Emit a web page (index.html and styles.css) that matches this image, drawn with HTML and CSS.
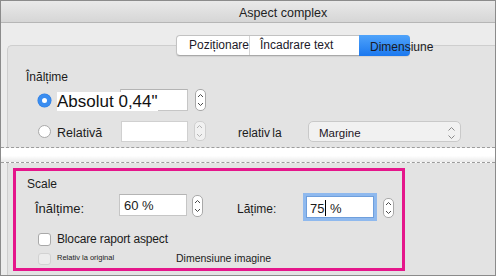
FILE: index.html
```html
<!DOCTYPE html>
<html lang="ro">
<head>
    <meta charset="UTF-8">
    <meta name="viewport" content="width=device-width, initial-scale=1.0">
    <title>Aspect complex</title>
    <link rel="stylesheet" href="styles.css">
</head>
<body>
    <div class="window">
        <div class="titlebar">Aspect complex</div>

        <div class="tabs">
            <div class="tab tab-pos">Poziționare</div>
            <div class="tab tab-wrap">Încadrare text</div>
            <div class="tab tab-size active">Dimensiune</div>
        </div>

        <div class="panel">
            <div class="group-title">Înălțime</div>
            <div class="row row-abs">
                <span class="radio checked"></span>
                <div class="abs-label"><span>Absolut 0,44"</span></div>
                <div class="field field-abs"></div>
                <span class="stepper"><svg width="11" height="22" viewBox="0 0 11 22"><path d="M3 8 L5.5 5.5 L8 8 M3 14 L5.5 16.5 L8 14" /></svg></span>
            </div>
            <div class="row row-rel">
                <span class="radio"></span>
                <div class="rel-label">Relativă</div>
                <div class="field field-rel"></div>
                <span class="stepper disabled"><svg width="11" height="20" viewBox="0 0 11 20"><path d="M3 7 L5.5 4.5 L8 7 M3 13 L5.5 15.5 L8 13" /></svg></span>
                <div class="rel-to">relativ la</div>
                <div class="select">Margine
                    <svg width="9" height="14" viewBox="0 0 9 14"><path d="M1.5 4.5 L4.5 1.5 L7.5 4.5 M1.5 9.5 L4.5 12.5 L7.5 9.5" /></svg>
                </div>
            </div>
        </div>

        <div class="divider"></div>

        <div class="panel panel-lower">
            <div class="scale-box">
                <div class="group-title scale-title">Scale</div>
                <div class="row row-scale">
                    <div class="scale-label">Înălțime:</div>
                    <div class="field field-scale">60 %</div>
                    <span class="stepper step-h"><svg width="11" height="22" viewBox="0 0 11 22"><path d="M3 8 L5.5 5.5 L8 8 M3 14 L5.5 16.5 L8 14" /></svg></span>
                    <div class="width-label">Lățime:</div>
                    <div class="field field-focus">75<span class="caret"></span> %</div>
                    <span class="stepper step-w"><svg width="11" height="20" viewBox="0 0 11 20"><path d="M3 7 L5.5 4.5 L8 7 M3 13 L5.5 15.5 L8 13" /></svg></span>
                </div>
                <div class="row row-check">
                    <span class="checkbox"></span>
                    <div class="check-label">Blocare raport aspect</div>
                </div>
                <div class="row row-check2">
                    <span class="checkbox disabled"></span>
                    <div class="orig-label">Relativ la original</div>
                    <div class="img-label">Dimensiune imagine</div>
                </div>
            </div>
        </div>
    </div>
</body>
</html>
```

FILE: styles.css
```css
* { margin: 0; padding: 0; box-sizing: border-box; }
body { width: 496px; height: 276px; overflow: hidden; font-family: "Liberation Sans", Arial, sans-serif; color: #1b1b1b; background-color: #ececec; }
.window { width: 496px; height: 276px; border: 1px solid #8b8b8b; background-color: #ececec; }

/* title bar */
.titlebar { height: 22px; padding: 3px 0 0 238px; line-height: 18px; font-size: 12.5px; color: #222; border-bottom: 1px solid #b6b6b6; background: linear-gradient(#e9e9e9, #d6d6d6); }

/* segmented tabs */
.tabs { position: relative; z-index: 1; display: flex; width: 234px; height: 21px; margin: 12px 0 -11px 175px; background-color: #fff; border: 1px solid #c2c2c2; border-bottom-color: #a9a9a9; border-radius: 4px; box-shadow: 0 1px 1px rgba(0, 0, 0, 0.08); font-size: 12px; line-height: 19px; color: #1c1a2a; }
.tab { white-space: nowrap; }
.tab-pos { width: 72px; padding-left: 12px; }
.tab-wrap { width: 111px; padding-left: 10px; border-left: 1px solid #d4d4d4; }
.tab-size { width: 49px; padding-left: 11px; }
.tab.active { margin: -1px -1px -1px 0; padding-top: 3px; width: 51px; background: linear-gradient(#4fa3fa, #1b78ef); border-radius: 0 4px 4px 0; color: #1a1a24; }

/* panels */
.panel { height: 102px; margin-left: 6px; padding: 24px 0 0 18px; background-color: #e3e3e3; border-top: 1px solid #cecece; border-left: 1px solid #cecece; border-radius: 5px 0 0 0; }
.group-title { font-size: 12px; line-height: 14px; }
.row { display: flex; align-items: center; }
.row-abs { height: 22px; margin-top: 5px; }
.row-rel { height: 21px; margin-top: 10px; }

.radio { width: 13px; height: 13px; margin-left: 12px; border-radius: 50%; background-color: #fff; border: 1px solid #a9a9a9; flex-shrink: 0; }
.radio.checked { border: 4px solid #3a8df0; background-color: #fff; box-shadow: 0 0 0 0.5px #2c7ce0; }

.abs-label { width: 63px; margin-left: 6px; align-self: flex-start; margin-top: 3px; white-space: nowrap; }
.abs-label span { position: relative; z-index: 1; display: inline-block; font-size: 17px; line-height: 19px; background-color: #fff; color: #111; }
.rel-label { width: 64px; margin-left: 6px; font-size: 12.5px; padding-top: 2px; }

.field { height: 22px; background-color: #fff; border: 1px solid #c6c6c6; border-top-color: #b4b4b4; }
.field-abs { width: 68px; }
.field-rel { width: 67px; height: 21px; border-color: #d0d0d0; }

.stepper { display: block; width: 11px; height: 22px; margin-left: 7px; background-color: #fff; border: 1px solid #a9a9a9; border-radius: 5px; flex-shrink: 0; }
.stepper svg { display: block; margin: -1px 0 0 -1px; }
.stepper path { fill: none; stroke: #4a4a4a; stroke-width: 1; }
.stepper.disabled { width: 12px; height: 20px; margin-left: 6px; align-self: flex-start; border-color: #cfcfcf; background-color: #f1f1f1; }
.stepper.disabled path { stroke: #b4b4b4; }

.rel-to { width: 70px; margin-left: 32px; font-size: 12px; word-spacing: -1px; padding-top: 2px; }
.select { display: flex; align-items: center; justify-content: space-between; width: 153px; height: 21px; padding: 2px 4px 0 10px; background-color: #f1f1f1; border: 1px solid #c9c9c9; border-radius: 5px; font-size: 11.5px; color: #1d1526; }
.select path { fill: none; stroke: #8a8a8a; stroke-width: 1; }

/* divider band between sections */
.divider { height: 16px; border-top: 1px dashed #9c9c9c; border-bottom: 1px dashed #9c9c9c; background: linear-gradient(#fff 55%, #e9e9e9); }

/* lower section */
.panel-lower { height: 112px; padding: 5px 0 0 5px; border-top: none; border-radius: 0; }
.scale-box { width: 392px; height: 103px; border: 3px solid #e5168b; }
.scale-title { padding: 6px 0 0 11px; }
.row-scale { height: 24px; margin-top: 3px; align-items: flex-start; }
.scale-label { width: 84px; margin-left: 19px; margin-top: 8px; font-size: 13px; line-height: 14px; }
.field-scale { width: 68px; padding: 3px 0 0 4px; font-size: 13px; line-height: 16px; }
.step-h { margin: 1px 0 0 5px; }
.width-label { width: 69px; margin-left: 34px; margin-top: 8px; font-size: 12px; line-height: 14px; }
.field-focus { width: 68px; margin-top: 2px; padding: 3px 0 0 3px; font-size: 13px; line-height: 16px; border-color: #6f9fdc; box-shadow: 0 0 0 3px #8fb9ee; }
.caret { display: inline-block; width: 1px; height: 16px; margin: 0 0 -3px 1px; background-color: #000; vertical-align: baseline; }
.step-w { width: 11px; height: 20px; margin: 4px 0 0 9px; }

.checkbox { width: 13px; height: 13px; margin-left: 22px; background-color: #fff; border: 1px solid #a9a9a9; border-radius: 3px; flex-shrink: 0; }
.checkbox.disabled { width: 13px; height: 12px; align-self: flex-end; border-color: #d2d2d2; background-color: #ececec; }
.row-check { height: 14px; margin-top: 14px; }
.check-label { margin-left: 6px; font-size: 12px; line-height: 14px; letter-spacing: -0.15px; }
.row-check2 { height: 14px; margin-top: 5px; align-items: flex-start; }
.orig-label { width: 119px; margin: 2px 0 0 6px; font-size: 7.5px; line-height: 10px; color: #222; }
.img-label { align-self: flex-end; font-size: 10.5px; line-height: 13px; }
```
